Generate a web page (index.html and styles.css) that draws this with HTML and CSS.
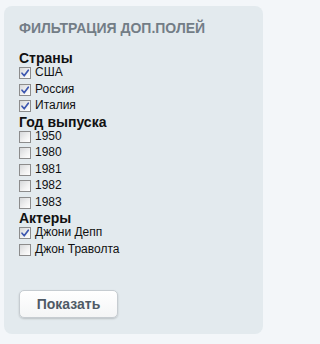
FILE: index.html
```html
<!DOCTYPE html>
<html lang="ru">
<head>
<meta charset="utf-8">
<title>Фильтрация доп.полей</title>
<link rel="stylesheet" href="styles.css">
</head>
<body>
<div class="panel">
  <div class="title">ФИЛЬТРАЦИЯ ДОП.ПОЛЕЙ</div>
  <div class="group">
    <div class="heading">Страны</div>
    <label class="row"><span class="box"><svg viewBox="0 0 10 10" class="tick"><path d="M2 5.2 L4.2 7.8 L8.3 2.2"/></svg></span><span class="lbl">США</span></label>
    <label class="row"><span class="box"><svg viewBox="0 0 10 10" class="tick"><path d="M2 5.2 L4.2 7.8 L8.3 2.2"/></svg></span><span class="lbl">Россия</span></label>
    <label class="row"><span class="box"><svg viewBox="0 0 10 10" class="tick"><path d="M2 5.2 L4.2 7.8 L8.3 2.2"/></svg></span><span class="lbl">Италия</span></label>
    <div class="heading">Год выпуска</div>
    <label class="row"><span class="box"></span><span class="lbl">1950</span></label>
    <label class="row"><span class="box"></span><span class="lbl">1980</span></label>
    <label class="row"><span class="box"></span><span class="lbl">1981</span></label>
    <label class="row"><span class="box"></span><span class="lbl">1982</span></label>
    <label class="row"><span class="box"></span><span class="lbl">1983</span></label>
    <div class="heading">Актеры</div>
    <label class="row"><span class="box"><svg viewBox="0 0 10 10" class="tick"><path d="M2 5.2 L4.2 7.8 L8.3 2.2"/></svg></span><span class="lbl">Джони Депп</span></label>
    <label class="row"><span class="box"></span><span class="lbl">Джон Траволта</span></label>
  </div>
  <button class="btn" type="button">Показать</button>
</div>
</body>
</html>
```
FILE: styles.css
```css
html, body {
  margin: 0;
  padding: 0;
  background: #f3f6f9;
  font-family: "Liberation Sans", Arial, sans-serif;
}

.panel {
  box-sizing: border-box;
  width: 259px;
  margin: 6px 0 0 4px;
  padding: 14px 15px 16px 15px;
  background: #e3eaee;
  border-radius: 8px;
  display: flex;
  flex-direction: column;
  align-items: flex-start;
}

.title {
  font-size: 14px;
  font-weight: bold;
  line-height: 16px;
  color: #737d86;
  margin-bottom: 15px;
}

.group {
  display: flex;
  flex-direction: column;
}

.heading {
  font-size: 14px;
  font-weight: bold;
  line-height: 14px;
  color: #111;
}

.row {
  height: 16.5px;
  display: flex;
  align-items: flex-start;
  gap: 4px;
  font-size: 12px;
  color: #111;
}

.box {
  box-sizing: border-box;
  width: 12px;
  height: 12px;
  margin-top: 2px;
  border: 1px solid #8c8c8c;
  background: linear-gradient(135deg, #d6d8da 0%, #f2f2f2 60%, #ffffff 100%);
  display: flex;
  align-items: center;
  justify-content: center;
}

.tick {
  width: 10px;
  height: 10px;
  fill: none;
  stroke: #3e58b0;
  stroke-width: 1.7;
  stroke-linecap: round;
  stroke-linejoin: round;
}

.lbl {
  line-height: 15px;
}

.btn {
  margin-top: 32px;
  width: 99px;
  height: 28px;
  padding: 0;
  border: 1px solid #c6ccd1;
  border-radius: 5px;
  background: linear-gradient(#ffffff, #f4f5f6);
  box-shadow: 0 1px 2px rgba(0, 0, 0, 0.18);
  font-family: "Liberation Sans", Arial, sans-serif;
  font-size: 14px;
  font-weight: bold;
  color: #4f5a66;
}
```
